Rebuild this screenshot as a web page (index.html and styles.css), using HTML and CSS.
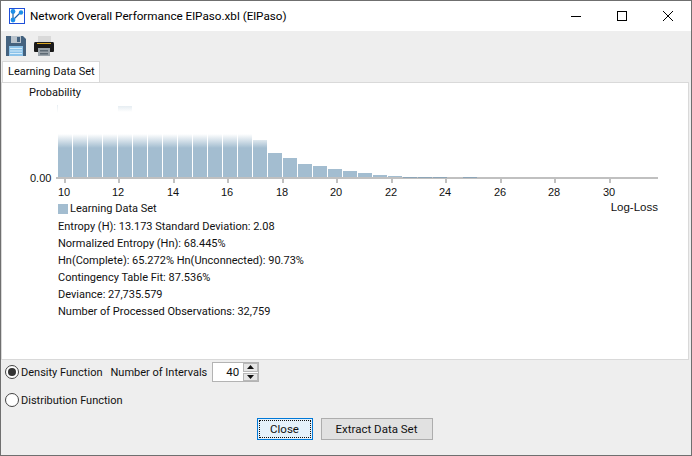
FILE: index.html
```html
<!DOCTYPE html>
<html>
<head>
<meta charset="utf-8">
<title>Network Overall Performance</title>
<link rel="stylesheet" href="styles.css">
</head>
<body>
<div class="window">
  <header class="titlebar">
    <svg class="app-icon" width="16" height="16" viewBox="0 0 16 16">
      <rect x="0.5" y="0.5" width="15" height="15" fill="#fff" stroke="#1f4fd8"/>
      <path d="M4 3.5 V12 L12 4" fill="none" stroke="#1c5fa8" stroke-width="1.2"/>
      <circle cx="4" cy="3.5" r="2.4" fill="#1e8fe8"/>
      <circle cx="4" cy="12" r="2.4" fill="#1e8fe8"/>
      <circle cx="12" cy="4.5" r="2.2" fill="#1e8fe8"/>
    </svg>
    <span class="title">Network Overall Performance ElPaso.xbl (ElPaso)</span>
    <div class="controls">
      <svg class="ctl" width="46" height="30" viewBox="0 0 46 30"><path d="M18 15.5 H28" stroke="#000" fill="none"/></svg>
      <svg class="ctl" width="46" height="30" viewBox="0 0 46 30"><rect x="18.5" y="10.5" width="9" height="9" stroke="#000" fill="none"/></svg>
      <svg class="ctl" width="46" height="30" viewBox="0 0 46 30"><path d="M18 10 L28 20 M28 10 L18 20" stroke="#000" fill="none"/></svg>
    </div>
  </header>

  <div class="toolbar">
    <svg width="21" height="21" viewBox="0 0 21 21">
      <path d="M0 0 H17 L20 3 V20 H0 Z" fill="#44627f"/>
      <rect x="5" y="0" width="10" height="7" fill="#b9c3cc"/>
      <rect x="11" y="1" width="3" height="5" fill="#44627f"/>
      <rect x="3" y="10" width="14" height="10" fill="#8cc3ea"/>
      <path d="M4 12.5 H16 M4 15 H16 M4 17.5 H16" stroke="#d7ecf9"/>
    </svg>
    <svg width="21" height="21" viewBox="0 0 21 21">
      <rect x="4" y="0" width="13" height="6" fill="#d9d9d9"/>
      <path d="M1 6 H19 Q20 6 20 8 V15 Q20 16 19 16 H1 Q0 16 0 15 V8 Q0 6 1 6 Z" fill="#1a1a1a"/>
      <rect x="3" y="7" width="14" height="1" fill="#d9a521"/>
      <rect x="4" y="12" width="12" height="8" fill="#9aa3aa"/>
      <rect x="6" y="14" width="8" height="1.5" fill="#5d6a74"/>
      <rect x="6" y="17" width="8" height="1.5" fill="#5d6a74"/>
    </svg>
  </div>

  <div class="tabs"><div class="tab">Learning Data Set</div></div>

  <main class="panel">
    <svg class="chart" width="686" height="132" viewBox="0 0 686 132">
      <defs>
        <linearGradient id="fade" x1="0" y1="0" x2="0" y2="1">
          <stop offset="0" stop-color="#a3bdd0" stop-opacity="0"/>
          <stop offset="1" stop-color="#a3bdd0"/>
        </linearGradient>
        <linearGradient id="fade2" x1="0" y1="0" x2="0" y2="1">
          <stop offset="0" stop-color="#dfe8ee"/>
          <stop offset="1" stop-color="#a3bdd0"/>
        </linearGradient>
        <linearGradient id="fade3" x1="0" y1="0" x2="0" y2="1">
          <stop offset="0" stop-color="#e6edf2"/>
          <stop offset="1" stop-color="#ffffff"/>
        </linearGradient>
      </defs>
      <text class="lbl prob" x="27" y="13">Probability</text>
      <text class="lbl" x="28" y="99">0.00</text>
      <rect x="116" y="23" width="14" height="6" fill="url(#fade3)"/>
      <rect x="55" y="22" width="1" height="8" fill="url(#fade3)"/>
      <g fill="url(#fade)">
        <rect x="56" y="51" width="14" height="14"/><rect x="71" y="51" width="14" height="14"/>
        <rect x="86" y="51" width="14" height="14"/><rect x="101" y="51" width="14" height="14"/>
        <rect x="116" y="51" width="14" height="14"/><rect x="131" y="51" width="14" height="14"/>
        <rect x="146" y="51" width="14" height="14"/><rect x="161" y="51" width="14" height="14"/>
        <rect x="176" y="51" width="14" height="14"/><rect x="191" y="51" width="14" height="14"/>
        <rect x="206" y="51" width="14" height="14"/><rect x="221" y="51" width="14" height="14"/>
        <rect x="236" y="51" width="14" height="14"/>
      </g>
      <g fill="#a3bdd0">
        <rect x="56" y="65" width="14" height="30"/><rect x="71" y="65" width="14" height="30"/>
        <rect x="86" y="65" width="14" height="30"/><rect x="101" y="65" width="14" height="30"/>
        <rect x="116" y="65" width="14" height="30"/><rect x="131" y="65" width="14" height="30"/>
        <rect x="146" y="65" width="14" height="30"/><rect x="161" y="65" width="14" height="30"/>
        <rect x="176" y="65" width="14" height="30"/><rect x="191" y="65" width="14" height="30"/>
        <rect x="206" y="65" width="14" height="30"/><rect x="221" y="65" width="14" height="30"/>
        <rect x="236" y="65" width="14" height="30"/>
        <rect x="251" y="65" width="14" height="30"/>
        <rect x="266" y="70" width="14" height="25"/>
        <rect x="281" y="75" width="14" height="20"/>
        <rect x="296" y="81" width="14" height="14"/>
        <rect x="311" y="83" width="14" height="12"/>
        <rect x="326" y="86" width="14" height="9"/>
        <rect x="341" y="88" width="14" height="7"/>
        <rect x="356" y="90" width="14" height="5"/>
        <rect x="371" y="92" width="14" height="3"/>
        <rect x="386" y="93" width="14" height="2"/>
      </g>
      <rect x="251" y="57" width="14" height="8" fill="url(#fade2)"/>
      <rect x="54" y="94" width="602" height="2" fill="#c0c0c0"/>
      <g fill="#8ea6b8">
        <rect x="401" y="94" width="14" height="1"/><rect x="416" y="94" width="14" height="1"/>
        <rect x="431" y="94" width="14" height="1"/><rect x="461" y="94" width="14" height="1"/>
      </g>
      <g fill="#c0c0c0">
        <rect x="62" y="96" width="2" height="4"/><rect x="116" y="96" width="2" height="4"/>
        <rect x="171" y="96" width="2" height="4"/><rect x="225" y="96" width="2" height="4"/>
        <rect x="280" y="96" width="2" height="4"/><rect x="334" y="96" width="2" height="4"/>
        <rect x="389" y="96" width="2" height="4"/><rect x="443" y="96" width="2" height="4"/>
        <rect x="498" y="96" width="2" height="4"/><rect x="552" y="96" width="2" height="4"/>
        <rect x="607" y="96" width="2" height="4"/>
      </g>
      <g class="ticks">
        <text x="62" y="113">10</text><text x="116" y="113">12</text><text x="171" y="113">14</text>
        <text x="225" y="113">16</text><text x="280" y="113">18</text><text x="334" y="113">20</text>
        <text x="389" y="113">22</text><text x="443" y="113">24</text><text x="498" y="113">26</text>
        <text x="552" y="113">28</text><text x="607" y="113">30</text>
      </g>
      <text class="lbl end" x="656" y="128">Log-Loss</text>
    </svg>
    <div class="legend"><span class="swatch"></span><span>Learning Data Set</span></div>
    <ul class="stats">
      <li>Entropy (H): 13.173 Standard Deviation: 2.08</li>
      <li>Normalized Entropy (Hn): 68.445%</li>
      <li>Hn(Complete): 65.272% Hn(Unconnected): 90.73%</li>
      <li>Contingency Table Fit: 87.536%</li>
      <li>Deviance: 27,735.579</li>
      <li>Number of Processed Observations: 32,759</li>
    </ul>
  </main>

  <div class="options">
    <div class="row">
      <span class="radio on"></span><span class="rlabel">Density Function</span>
      <span class="nlabel">Number of Intervals</span>
      <div class="spinner">
        <span class="value">40</span>
        <div class="arrows">
          <span class="arrow"><svg width="7" height="4" viewBox="0 0 7 4"><path d="M3.5 0 L7 4 H0 Z" fill="#111"/></svg></span>
          <span class="arrow"><svg width="7" height="4" viewBox="0 0 7 4"><path d="M0 0 H7 L3.5 4 Z" fill="#111"/></svg></span>
        </div>
      </div>
    </div>
    <div class="row second">
      <span class="radio"></span><span class="rlabel">Distribution Function</span>
    </div>
  </div>

  <div class="buttons">
    <button class="btn primary"><span>Close</span></button>
    <button class="btn">Extract Data Set</button>
  </div>
</div>
</body>
</html>
```
FILE: styles.css
```css
* { box-sizing: border-box; }
html, body { margin: 0; padding: 0; }
body { width: 692px; height: 456px; overflow: hidden; background: #eee; }
.window {
  width: 692px; height: 456px;
  display: flex; flex-direction: column;
  background: #eeeeee;
  border: 1px solid #6f6f6f;
  font: 11px Roboto, "Noto Sans", sans-serif;
  color: #111;
}
.titlebar {
  height: 30px; flex: none;
  background: #fff;
  display: flex; align-items: center;
  padding-left: 8px;
}
.title { margin-left: 5px; font-size: 11.7px; color: #000; }
.controls { margin-left: auto; display: flex; }
.ctl { display: block; }
.toolbar {
  height: 30px; flex: none;
  display: flex; align-items: flex-start; gap: 7px;
  padding: 5px 0 0 5px;
}
.tabs { height: 21px; flex: none; padding-left: 1px; display: flex; }
.tab {
  width: 98px; height: 21px;
  background: #fff;
  border: 1px solid #d9d9d9; border-bottom: none;
  padding-left: 5px;
  line-height: 20px;
  white-space: nowrap;
}
.panel {
  height: 278px; flex: none;
  margin: 0 2px 0 0;
  background: #fff;
  border: 1px solid #d9d9d9;
}
.chart { display: block; }
.lbl, .ticks text { font: 11px "Liberation Sans", Arial, sans-serif; fill: #111; }
.lbl.prob { font: 11px Roboto, sans-serif; }
.lbl.end { font-size: 11.5px; }
.end { text-anchor: end; }
.ticks text { text-anchor: middle; }
.legend {
  display: flex; align-items: center; gap: 2px;
  padding-left: 56px;
  height: 15px; margin-top: -14px;
}
.swatch { width: 10px; height: 10px; background: #a3bdd0; }
.stats {
  list-style: none; margin: 2px 0 0; padding: 0 0 0 56px;
}
.stats li { height: 17px; line-height: 17px; }
.options { flex: none; padding: 0 0 0 4px; height: 58px; }
.row { display: flex; align-items: center; height: 24px; }
.second { margin-top: 4px; }
.radio {
  width: 14px; height: 14px; border-radius: 50%;
  border: 1px solid #444; background: #fff;
  display: flex; align-items: center; justify-content: center;
}
.radio.on::before { content: ""; width: 8px; height: 8px; border-radius: 50%; background: #333; }
.rlabel { margin-left: 2px; }
.nlabel { margin-left: 8px; }
.spinner {
  margin-left: 5px;
  width: 47px; height: 20px;
  background: #fff; border: 1px solid #b3b3b3;
  display: flex; align-items: center; justify-content: flex-end;
}
.value { margin-right: 4px; font-size: 11.5px; }
.arrows { width: 15px; height: 18px; display: flex; flex-direction: column; gap: 1px; }
.arrow {
  flex: 1; background: #e6e6e6; border: 1px solid #b8b8b8;
  display: flex; align-items: center; justify-content: center;
}
.buttons { flex: none; display: flex; justify-content: center; gap: 8px; padding-right: 3px; }
.btn {
  height: 22px; width: 112px; padding: 0;
  background: #e1e1e1; border: 1px solid #adadad;
  font: 11.5px Roboto, "Noto Sans", sans-serif; color: #111;
}
.btn.primary {
  width: 56px; background: #e5f1fb; border: 1px solid #0078d7;
  padding: 1px;
}
.btn.primary span {
  display: block; height: 18px; line-height: 16px;
  border: 1px dotted #111;
}
```
